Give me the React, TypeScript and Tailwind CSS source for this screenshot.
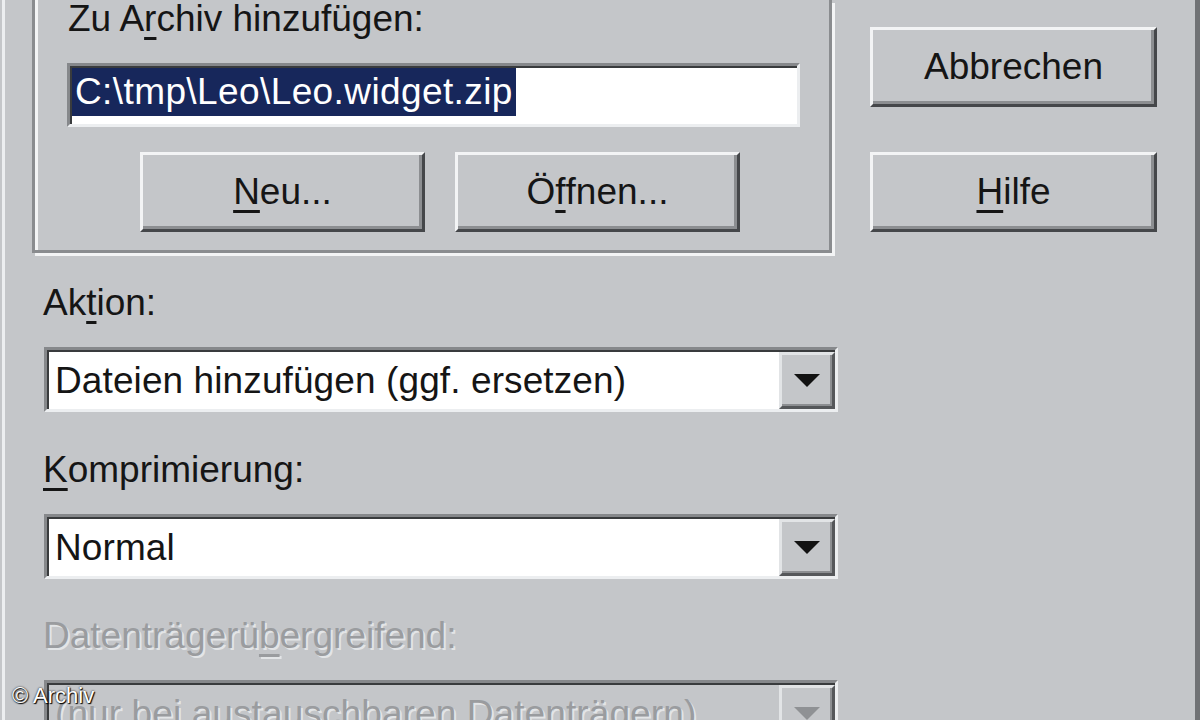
import type { ReactNode } from 'react';

const font = { fontFamily: '"Liberation Sans", Arial, sans-serif' };

function Key({ children }: { children: ReactNode }) {
  return <span className="underline decoration-[3px] underline-offset-[6px]">{children}</span>;
}

function Button({ children, className = '' }: { children: ReactNode; className?: string }) {
  return (
    <div
      className={`flex shrink-0 items-center justify-center h-[80px] border-[3px] border-t-[#f3f4f5] border-l-[#f3f4f5] border-r-[#45474a] border-b-[#45474a] shadow-[inset_-3px_-3px_0_#8c8e91] text-[37px] leading-[37px] text-[#151515] pb-[2px] ${className}`}
    >
      {children}
    </div>
  );
}

function Arrow({ disabled = false }: { disabled?: boolean }) {
  return (
    <div className="flex shrink-0 items-center justify-center w-[56px] h-full border-[3px] border-t-[#e2e4e6] border-l-[#e2e4e6] border-r-[#55575a] border-b-[#55575a] shadow-[inset_-2px_-2px_0_#8c8e91] bg-[#c4c6c9]">
      <svg width="26" height="14" viewBox="0 0 26 14">
        <polygon points="0,0 26,0 13,13" fill={disabled ? '#8f9194' : '#121212'} />
      </svg>
    </div>
  );
}

function Combo({ value, disabled = false }: { value: string; disabled?: boolean }) {
  return (
    <div
      className={`flex shrink-0 h-[65px] w-[794px] ml-[12px] border-[3px] border-t-[#86888b] border-l-[#86888b] border-r-[#eceef0] border-b-[#eceef0] shadow-[inset_2px_2px_0_#393b3d] pt-[2px] pl-[2px] ${disabled ? 'bg-[#c4c6c9]' : 'bg-white'}`}
    >
      <div
        className={`flex-1 flex items-center pl-[6px] text-[37px] leading-[37px] tracking-[0.1px] ${disabled ? 'text-[#9a9c9f] [text-shadow:2px_2px_0_#e3e5e7]' : 'text-[#151515]'}`}
      >
        {value}
      </div>
      <Arrow disabled={disabled} />
    </div>
  );
}

export default function App() {
  return (
    <div
      style={font}
      className="relative flex w-[1200px] h-[720px] overflow-hidden bg-[#c4c6c9] text-[#151515] shadow-[inset_2px_0_0_#c4c6c9,inset_5px_0_0_#eceef0,inset_-5px_0_0_#707275]"
    >
      {/* left column */}
      <div className="flex flex-col ml-[32px] w-[806px] shrink-0">
        {/* group box, top edge is cut off */}
        <div className="shrink-0 w-[800px] h-[253px] border-l-[3px] border-r-[3px] border-b-[3px] border-[#8a8c8f] shadow-[3px_3px_0_#f3f4f5,inset_3px_0_0_#f3f4f5] flex flex-col">
          <div className="shrink-0 ml-[33px] text-[37px] leading-[37px]">
            Zu A<Key>r</Key>chiv hinzufügen:
          </div>
          <div className="shrink-0 ml-[32px] mt-[26px] w-[733px] h-[64px] bg-white border-[3px] border-t-[#86888b] border-l-[#86888b] border-r-[#eceef0] border-b-[#eceef0] shadow-[inset_2px_2px_0_#393b3d] pt-[2px] pl-[2px]">
            <span className="inline-block bg-[#17275b] text-white text-[37px] leading-[48px] px-[3px] tracking-[0.4px]">
              C:\tmp\Leo\Leo.widget.zip
            </span>
          </div>
          <div className="flex shrink-0 gap-[30px] ml-[105px] mt-[25px]">
            <Button className="w-[285px]">
              <Key>N</Key>eu...
            </Button>
            <Button className="w-[285px]">
              Ö<Key>f</Key>fnen...
            </Button>
          </div>
        </div>

        <div className="shrink-0 ml-[11px] mt-[31px] text-[37px] leading-[37px]">
          Ak<Key>t</Key>ion:
        </div>
        <div className="shrink-0 mt-[26px]">
          <Combo value="Dateien hinzufügen (ggf. ersetzen)" />
        </div>

        <div className="shrink-0 ml-[11px] mt-[39px] text-[37px] leading-[37px]">
          <Key>K</Key>omprimierung:
        </div>
        <div className="shrink-0 mt-[26px]">
          <Combo value="Normal" />
        </div>

        <div className="shrink-0 ml-[11px] mt-[38px] text-[37px] leading-[37px] text-[#9a9c9f] [text-shadow:2px_2px_0_#e3e5e7]">
          Datenträgerü<Key>b</Key>ergreifend:
        </div>
        <div className="shrink-0 mt-[26px]">
          <Combo value="(nur bei austauschbaren Datenträgern)" disabled />
        </div>
      </div>

      {/* right column */}
      <div className="flex flex-col gap-[45px] ml-[32px] mt-[27px] w-[287px]">
        <Button>Abbrechen</Button>
        <Button>
          <Key>H</Key>ilfe
        </Button>
      </div>

      <div className="absolute left-[12px] top-[684px] text-[22px] leading-[24px] text-white [text-shadow:0_0_2px_#000,1px_1px_1px_#000]">
        © Archiv
      </div>
    </div>
  );
}
